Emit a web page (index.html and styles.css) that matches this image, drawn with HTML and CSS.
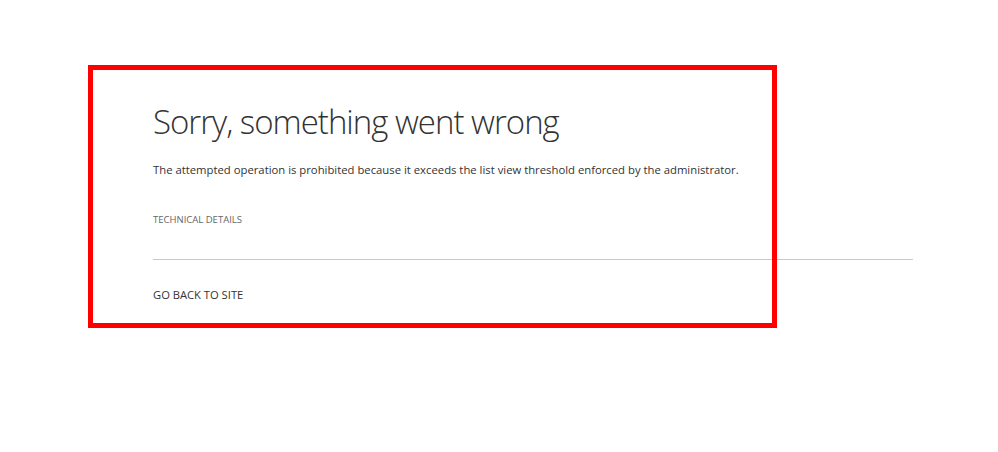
FILE: index.html
```html
<!DOCTYPE html>
<html lang="en">
<head>
<meta charset="utf-8">
<title>Error</title>
<link rel="stylesheet" href="styles.css">
</head>
<body>
<main class="page">
  <h1 class="title">Sorry, something went wrong</h1>
  <p class="message">The attempted operation is prohibited because it exceeds the list view threshold enforced by the administrator.</p>
  <div class="details">TECHNICAL DETAILS</div>
  <hr class="divider">
  <a class="back" href="#">GO BACK TO SITE</a>
</main>
<div class="highlight"></div>
</body>
</html>
```
FILE: styles.css
```css
html, body {
  margin: 0;
  padding: 0;
  background: #ffffff;
}
body {
  position: relative;
  width: 998px;
  height: 452px;
  overflow: hidden;
  font-family: "Open Sans", "Noto Sans", sans-serif;
  color: #333333;
}
.page {
  display: flex;
  flex-direction: column;
  align-items: flex-start;
  padding: 98px 85px 0 153px;
}
.title {
  margin: 0;
  font-size: 33px;
  font-weight: 300;
  line-height: 48px;
  color: #333333;
  letter-spacing: -1px;
}
.message {
  margin: 16px 0 0;
  font-size: 11.3px;
  line-height: 16px;
  color: #333333;
}
.details {
  margin-top: 35px;
  font-size: 9.5px;
  line-height: 14px;
  color: #666666;
}
.divider {
  align-self: stretch;
  margin: 32px 0 0;
  border: 0;
  border-top: 1px solid #c8c8c8;
  height: 0;
}
.back {
  margin-top: 27px;
  font-size: 11.2px;
  line-height: 16px;
  color: #333333;
  text-decoration: none;
}
.highlight {
  position: absolute;
  left: 88px;
  top: 65px;
  width: 679px;
  height: 253px;
  border: 5px solid #ff0000;
}
```
